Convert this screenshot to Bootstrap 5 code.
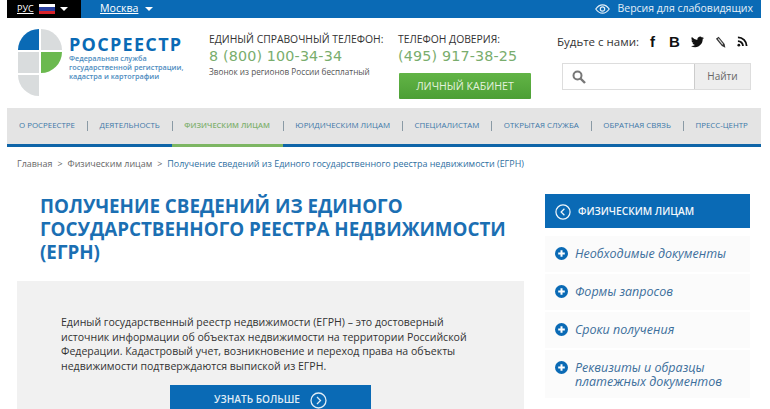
<!DOCTYPE html>
<html lang="ru">
<head>
    <meta charset="UTF-8">
    <title>Росреестр - Получение сведений из ЕГРН</title>
    <link href="https://cdn.jsdelivr.net/npm/bootstrap@5.3.3/dist/css/bootstrap.min.css" rel="stylesheet">
    <style>
        html, body { height: 409px; overflow: hidden; }
        body { background: #fff; color: #333; font-family: "Open Sans", "Liberation Sans", sans-serif; font-size: 11px; }
        a { text-decoration: none; }
        .page-wrap { width: 754px; margin-left: 7px; }
        .top-strip { height: 18px; background: #0a6ab5; color: #fff; font-size: 10px; }
        .lang-box { width: 74px; height: 18px; background: #000; padding-left: 10px; gap: 5px; }
        .lang-box a { color: #fff; font-size: 9px; text-decoration: underline; }
        .flag { width: 16px; height: 10px; background: linear-gradient(#fff 0 33%, #2a3f9e 33% 66%, #d8232a 66%); }
        .caret { width: 0; height: 0; border-left: 4px solid transparent; border-right: 4px solid transparent; border-top: 4px solid #fff; }
        .city { margin-left: 19px; gap: 7px; font-size: 10.6px; }
        .city a { color: #fff; text-decoration: underline; }
        .low-vision { margin-left: auto; padding-right: 8px; gap: 7px; font-size: 10.5px; color: #e3eef7; }
        .site-head { height: 90px; }
        .logo-col { width: 202px; padding: 11px 0 0 11px; gap: 6px; }
        .logo-name { color: #0a6ab5; font-weight: 700; font-size: 18px; line-height: 18px; margin-top: 6px; letter-spacing: 1.3px; }
        .logo-sub { color: #4d8cc0; font-size: 7.25px; line-height: 9px; font-weight: 600; margin-top: 1px; white-space: nowrap; }
        .phone-col { width: 189px; padding-top: 14px; }
        .trust-col { width: 159px; padding-top: 14px; }
        .phone-label { font-size: 10.35px; line-height: 15px; color: #333; white-space: nowrap; }
        .phone-num { font-family: "DejaVu Sans", sans-serif; font-size: 14.3px; line-height: 18px; color: #79ad6d; letter-spacing: .15px; white-space: nowrap; }
        .phone-note { font-size: 8.2px; line-height: 14px; color: #555; white-space: nowrap; }
        .cabinet-btn { width: 132px; height: 26px; margin: 8px 0 0 1px; padding: 0; background: linear-gradient(#62b446, #4c9f35); border: 0; border-radius: 1px; color: #e4f2de; font-size: 10.6px; line-height: 26px; }
        .social-col { width: 204px; padding-top: 14px; }
        .social-row { height: 19px; font-size: 11.5px; color: #333; gap: 11px; white-space: nowrap; }
        .social-row .glyph { font-family: "Liberation Sans", sans-serif; font-weight: 700; font-size: 15px; line-height: 19px; color: #111; }
        .social-row .glyph-f { margin-right: 3px; }
        .search-group { width: 189px; height: 27px; margin: 12px 0 0 5px; border: 1px solid #ddd; }
        .search-field { flex: 1; padding-left: 9px; }
        .search-go { width: 56px; height: 25px; padding: 0; background: #eee; border: 0; border-left: 1px solid #ccc; border-radius: 0; color: #666; font-size: 10px; }
        .main-nav { height: 39px; background: #e4e4e4; border-bottom: 3px solid #0f65a8; padding-left: 12px; flex-wrap: nowrap; }
        .main-nav .nav-link { padding: 0; font-size: 7.9px; color: #3d78a8; white-space: nowrap; }
        .main-nav .nav-item + .nav-item { margin-left: 12px; padding-left: 12.5px; background: linear-gradient(#8a9aa5, #8a9aa5) left center / 1px 10px no-repeat; }
        .main-nav .nav-item { display: flex; align-items: center; height: 36px; }
        .main-nav .nav-item.current { position: relative; margin-right: 1px; }
        .main-nav .nav-item.current .nav-link { color: #7fb06e; font-weight: 600; font-size: 7.5px; }
        .main-nav .nav-item.current::after { content: ""; position: absolute; left: 0; right: -13px; bottom: -3px; height: 3px; background: #7db663; }
        .crumbs { --bs-breadcrumb-divider: ">"; --bs-breadcrumb-item-padding-x: 5px; margin: 0; padding: 9px 0 0 10px; height: 47px; font-size: 8.95px; line-height: 15px; white-space: nowrap; flex-wrap: nowrap; }
        .crumbs a { color: #666; }
        .crumbs .breadcrumb-item.active { color: #2f6f9f; }
        .crumbs .breadcrumb-item + .breadcrumb-item::before { color: #666; }
        .content-row { padding-left: 10px; gap: 21px; }
        .left-col { width: 507px; }
        .page-title { margin: 0; padding: 1px 0 0 23px; height: 87px; color: #1b6fb3; font-size: 18.8px; line-height: 23px; font-weight: 700; }
        .lead-box { background: #f1f1f1; padding: 34px 37px 0 44px; height: 200px; }
        .lead-box p { margin: 0; font-size: 10.55px; line-height: 14.5px; color: #333; }
        .more-btn { display: flex; width: 201px; height: 30px; margin: 12px 0 0 109px; padding: 0; background: #0a6ab5; border: 0; border-radius: 0; color: #dfecf6; font-size: 10.1px; font-weight: 600; align-items: center; justify-content: center; gap: 10px; }
        .right-col { width: 205px; }
        .side-head { height: 34px; padding: 1px 0 0 10px; background: #0a6ab5; color: #f2f7fb; font-size: 10.2px; font-weight: 600; gap: 7px; margin-bottom: 8px; }
        .side-list { --bs-list-group-border-width: 0; --bs-list-group-bg: #fbfbfb; --bs-list-group-item-padding-x: 0; --bs-list-group-item-padding-y: 0; border-radius: 0; gap: 2px; }
        .side-list .list-group-item { display: flex; gap: 7px; padding: 11px 0 9px 10px; min-height: 36px; font-style: italic; font-size: 12.5px; line-height: 14px; color: #3d6f9c; }
        .plus-dot { flex: none; }
    </style>
</head>
<body>
<div class="page-wrap">
    <div class="top-strip d-flex align-items-center">
        <div class="lang-box d-flex align-items-center">
            <a href="#">РУС</a>
            <span class="flag"></span>
            <span class="caret"></span>
        </div>
        <div class="city d-flex align-items-center">
            <a href="#">Москва</a>
            <span class="caret"></span>
        </div>
        <div class="low-vision d-flex align-items-center">
            <svg width="15" height="10" viewBox="0 0 15 10" fill="none" stroke="#e3eef7" stroke-width="1.2"><path d="M.8 5C3 1.8 5 .8 7.500 .8S12 1.800 14.200 5C12 8.200 10 9.200 7.500 9.200S3 8.200 .8 5z"/><circle cx="7.500" cy="5" r="2.200"/></svg>
            <span>Версия для слабовидящих</span>
        </div>
    </div>

    <div class="site-head d-flex">
        <div class="logo-col d-flex">
            <svg width="45" height="68" viewBox="0 0 45 68" class="flex-shrink-0">
                <path d="M0 21A21 21 0 0 1 21 0V21Z" fill="#0a6ab5"/>
                <path d="M23 0A21 21 0 0 1 44 21H23Z" fill="#d9dcdd"/>
                <rect x="0" y="23" width="21" height="21" fill="#d9dcdd"/>
                <path d="M23 23H44A21 21 0 0 1 23 44Z" fill="#6bb94f"/>
                <path d="M0 46H21V67A21 21 0 0 1 0 46Z" fill="#d9dcdd"/>
            </svg>
            <div>
                <div class="logo-name">РОСРЕЕСТР</div>
                <div class="logo-sub">Федеральная служба<br>государственной регистрации,<br>кадастра и картографии</div>
            </div>
        </div>
        <div class="phone-col">
            <div class="phone-label">ЕДИНЫЙ СПРАВОЧНЫЙ ТЕЛЕФОН:</div>
            <div class="phone-num">8 (800) 100-34-34</div>
            <div class="phone-note">Звонок из регионов России бесплатный</div>
        </div>
        <div class="trust-col">
            <div class="phone-label">ТЕЛЕФОН ДОВЕРИЯ:</div>
            <div class="phone-num">(495) 917-38-25</div>
            <button class="btn cabinet-btn" type="button">ЛИЧНЫЙ КАБИНЕТ</button>
        </div>
        <div class="social-col">
            <div class="social-row d-flex align-items-center">
                <span>Будьте с нами:</span>
                <span class="glyph glyph-f">f</span>
                <span class="glyph">B</span>
                <svg width="13" height="13" viewBox="0 0 16 16" fill="#111"><path d="M5.026 15c6.038 0 9.341-5.003 9.341-9.334 0-.14 0-.282-.006-.422A6.685 6.685 0 0 0 16 3.542a6.658 6.658 0 0 1-1.889.518 3.301 3.301 0 0 0 1.447-1.817 6.533 6.533 0 0 1-2.087.793A3.286 3.286 0 0 0 7.875 6.03a9.325 9.325 0 0 1-6.767-3.429 3.289 3.289 0 0 0 1.018 4.382A3.323 3.323 0 0 1 .64 6.575v.045a3.288 3.288 0 0 0 2.632 3.218 3.203 3.203 0 0 1-.865.115 3.23 3.23 0 0 1-.614-.057 3.283 3.283 0 0 0 3.067 2.277A6.588 6.588 0 0 1 .78 13.58a6.32 6.32 0 0 1-.78-.045A9.344 9.344 0 0 0 5.026 15z"/></svg>
                <svg width="11" height="14" viewBox="0 0 12 14"><path d="M1 3.500 4 1.200l6.500 8 .8 4-3.800-1.800z" fill="#333"/><path d="M3 3.800 4 3l5 6.200-1 .9z" fill="#ddd"/></svg>
                <svg width="11" height="11" viewBox="0 0 12 12" fill="none" stroke="#111" stroke-width="2"><circle cx="2" cy="10" r="1.500" fill="#111" stroke="none"/><path d="M1 5.500A5.500 5.500 0 0 1 6.500 11"/><path d="M1 1.500A9.500 9.500 0 0 1 10.500 11"/></svg>
            </div>
            <div class="search-group d-flex align-items-center">
                <div class="search-field">
                    <svg width="14" height="14" viewBox="0 0 14 14" fill="none" stroke="#777" class="d-block"><circle cx="5.500" cy="5.500" r="4" stroke-width="2"/><path d="M8.500 8.500 13 13" stroke-width="2.400"/></svg>
                </div>
                <button class="btn search-go" type="button">Найти</button>
            </div>
        </div>
    </div>

    <ul class="nav main-nav">
        <li class="nav-item"><a class="nav-link" href="#">О РОСРЕЕСТРЕ</a></li>
        <li class="nav-item"><a class="nav-link" href="#">ДЕЯТЕЛЬНОСТЬ</a></li>
        <li class="nav-item current"><a class="nav-link" href="#">ФИЗИЧЕСКИМ ЛИЦАМ</a></li>
        <li class="nav-item"><a class="nav-link" href="#">ЮРИДИЧЕСКИМ ЛИЦАМ</a></li>
        <li class="nav-item"><a class="nav-link" href="#">СПЕЦИАЛИСТАМ</a></li>
        <li class="nav-item"><a class="nav-link" href="#">ОТКРЫТАЯ СЛУЖБА</a></li>
        <li class="nav-item"><a class="nav-link" href="#">ОБРАТНАЯ СВЯЗЬ</a></li>
        <li class="nav-item"><a class="nav-link" href="#">ПРЕСС-ЦЕНТР</a></li>
    </ul>

    <ol class="breadcrumb crumbs">
        <li class="breadcrumb-item"><a href="#">Главная</a></li>
        <li class="breadcrumb-item"><a href="#">Физическим лицам</a></li>
        <li class="breadcrumb-item active">Получение сведений из Единого государственного реестра недвижимости (ЕГРН)</li>
    </ol>

    <div class="content-row d-flex">
        <div class="left-col">
            <h1 class="page-title">ПОЛУЧЕНИЕ СВЕДЕНИЙ ИЗ ЕДИНОГО ГОСУДАРСТВЕННОГО РЕЕСТРА НЕДВИЖИМОСТИ (ЕГРН)</h1>
            <div class="lead-box">
                <p>Единый государственный реестр недвижимости (ЕГРН) – это достоверный источник информации об объектах недвижимости на территории Российской Федерации. Кадастровый учет, возникновение и переход права на объекты недвижимости подтверждаются выпиской из ЕГРН.</p>
                <button class="btn more-btn" type="button">
                    <span>УЗНАТЬ БОЛЬШЕ</span>
                    <svg width="17" height="17" viewBox="0 0 17 17" fill="none" stroke="#dfecf6" stroke-width="1.300"><circle cx="8.500" cy="8.500" r="7.500"/><path d="M7 5l3.500 3.500L7 12"/></svg>
                </button>
            </div>
        </div>
        <div class="right-col">
            <div class="side-head d-flex align-items-center">
                <svg width="16" height="16" viewBox="0 0 17 17" fill="none" stroke="#f2f7fb" stroke-width="1.300"><circle cx="8.500" cy="8.500" r="7.500"/><path d="M10 5 6.500 8.500 10 12"/></svg>
                <span>ФИЗИЧЕСКИМ ЛИЦАМ</span>
            </div>
            <div class="list-group side-list">
                <a href="#" class="list-group-item"><svg class="plus-dot" width="13" height="13" viewBox="0 0 13 13"><circle cx="6.500" cy="6.500" r="6.500" fill="#0a6ab5"/><path d="M3.200 6.500h6.600M6.500 3.200v6.600" stroke="#fff" stroke-width="2"/></svg><span>Необходимые документы</span></a>
                <a href="#" class="list-group-item"><svg class="plus-dot" width="13" height="13" viewBox="0 0 13 13"><circle cx="6.500" cy="6.500" r="6.500" fill="#0a6ab5"/><path d="M3.200 6.500h6.600M6.500 3.200v6.600" stroke="#fff" stroke-width="2"/></svg><span>Формы запросов</span></a>
                <a href="#" class="list-group-item"><svg class="plus-dot" width="13" height="13" viewBox="0 0 13 13"><circle cx="6.500" cy="6.500" r="6.500" fill="#0a6ab5"/><path d="M3.200 6.500h6.600M6.500 3.200v6.600" stroke="#fff" stroke-width="2"/></svg><span>Сроки получения</span></a>
                <a href="#" class="list-group-item"><svg class="plus-dot" width="13" height="13" viewBox="0 0 13 13"><circle cx="6.500" cy="6.500" r="6.500" fill="#0a6ab5"/><path d="M3.200 6.500h6.600M6.500 3.200v6.600" stroke="#fff" stroke-width="2"/></svg><span>Реквизиты и образцы<br>платежных документов</span></a>
            </div>
        </div>
    </div>
</div>
<script src="https://cdn.jsdelivr.net/npm/bootstrap@5.3.3/dist/js/bootstrap.bundle.min.js"></script>
</body>
</html>
